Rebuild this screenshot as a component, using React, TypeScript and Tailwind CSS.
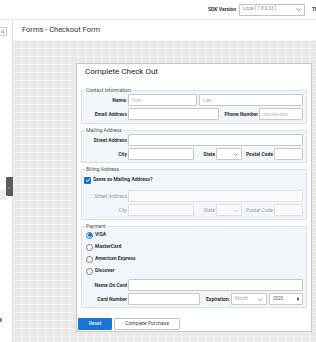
import React from 'react';
import clsx from 'clsx';

const Chevron = ({ className = '' }: { className?: string }) => (
  <svg viewBox="0 0 10 6" className={className} fill="none" stroke="currentColor" strokeWidth="1.3">
    <path d="M1 1l4 4 4-4" />
  </svg>
);

const Label = ({ children, w, muted }: { children: React.ReactNode; w: string; muted?: boolean }) => (
  <span
    className={clsx(
      'shrink-0 text-right pr-[1px] text-[5px] leading-none whitespace-nowrap',
      muted ? 'text-[#a0a0a0] font-normal' : 'font-bold text-[#333]',
      w
    )}
  >
    {children}
  </span>
);

const Field = ({ placeholder, className = '', muted }: { placeholder?: string; className?: string; muted?: boolean }) => (
  <input
    readOnly
    placeholder={placeholder}
    className={clsx(
      'h-[12px] w-0 min-w-0 rounded-[1px] border px-[3px] text-[4.5px] outline-none placeholder:text-[#b0b0b0]',
      muted ? 'border-[#dde2e8] bg-[#f8fafc]' : 'border-[#c8c8c8] bg-white',
      className
    )}
  />
);

const SelectBox = ({ text, className = '', muted }: { text?: string; className?: string; muted?: boolean }) => (
  <div
    className={clsx(
      'flex h-[12px] items-center justify-between rounded-[1px] border px-[3px] text-[4.5px]',
      muted ? 'border-[#dde2e8] bg-[#f8fafc] text-[#bbb]' : 'border-[#c8c8c8] bg-white text-[#666]',
      className
    )}
  >
    <span className="text-[#aaa]">{text}</span>
    <Chevron className="h-[3px] w-[5px]" />
  </div>
);

const Section = ({ legend, children, className = '' }: { legend: string; children: React.ReactNode; className?: string }) => (
  <fieldset className={clsx('mx-[4px] min-w-0 rounded-[1px] border border-[#d3e0ee] bg-[#f1f6fb] px-[3px]', className)}>
    <legend className="px-[1px] text-[5px] leading-[6px] text-[#555]">{legend}</legend>
    {children}
  </fieldset>
);

const Radio = ({ label, checked }: { label: string; checked?: boolean }) => (
  <div className="ml-[1px] flex h-[12px] items-center gap-[2px]">
    <span
      className={clsx(
        'flex h-[7px] w-[7px] items-center justify-center rounded-full border bg-white',
        checked ? 'border-[#1976d2]' : 'border-[#777]'
      )}
    >
      {checked && <span className="h-[4px] w-[4px] rounded-full bg-[#1976d2]" />}
    </span>
    <span className="text-[5px] font-bold text-[#333]">{label}</span>
  </div>
);

export default function App() {
  return (
    <div className="relative h-[342px] w-[316px] overflow-hidden bg-white font-[family-name:Roboto,sans-serif]">
      {/* top bar */}
      <div className="flex h-[20px] items-center justify-end border-b border-[#e6e6e6]">
        <span className="mr-[3px] text-[5px] font-bold text-[#333]">SDK Version</span>
        <div className="flex h-[12px] w-[66px] items-center justify-between border border-[#c4c4c4] px-[3px] text-[4.5px] text-[#888]">
          <span>Local [ 7.8.0.33 ]</span>
          <Chevron className="h-[3px] w-[5px] text-[#555]" />
        </div>
        <span className="ml-[7px] w-[4px] overflow-hidden text-[5px] font-bold text-[#333]">Th</span>
      </div>

      <div className="flex h-[322px]">
        {/* sidebar */}
        <div className="w-[13px] shrink-0 border-r border-[#e2e2e2] bg-white">
          <div className="mt-[7px] flex h-[9px] w-[7px] items-center justify-end border-y border-r border-[#cfcfcf] pr-[1px]">
            <svg viewBox="0 0 10 10" className="h-[4px] w-[4px] text-[#666]" fill="none" stroke="currentColor" strokeWidth="1.4">
              <circle cx="4" cy="4" r="3" />
              <path d="M6.3 6.3L9 9" />
            </svg>
          </div>
        </div>

        {/* main */}
        <div className="flex min-w-0 flex-1 flex-col">
          <div className="flex h-[20px] shrink-0 items-center bg-white pl-[9px] text-[7.5px] text-[#333]">
            Forms - Checkout Form
          </div>
          <div className="flex-1 bg-[#e9e9e9] bg-[linear-gradient(to_right,#f1f1f1_1px,transparent_1px),linear-gradient(to_bottom,#f1f1f1_1px,transparent_1px)] bg-[size:8px_8px] pl-[63px] pt-[23px]">
            <div className="w-[236px] border border-[#c9c9c9] bg-white pb-[1px]">
              <div className="flex h-[16px] items-center pl-[8px] text-[8px] text-[#222]">Complete Check Out</div>

              <Section legend="Contact Information" className="mt-[7px] pb-[3px]">
                <div className="mt-[1px] flex items-center">
                  <Label w="w-[43px]">Name:</Label>
                  <Field placeholder="First" className="w-[69px] shrink-0" />
                  <Field placeholder="Last" className="ml-[2px] flex-1" />
                </div>
                <div className="mt-[2px] flex items-center">
                  <Label w="w-[43px]">Email Address</Label>
                  <Field className="w-[91px] shrink-0" />
                  <Label w="w-[40px]">Phone Number</Label>
                  <Field placeholder="xxx-xxx-xxxx" className="flex-1" />
                </div>
              </Section>

              <Section legend="Mailing Address" className="mt-[3px] pb-[2px]">
                <div className="mt-[1px] flex items-center">
                  <Label w="w-[43px]">Street Address</Label>
                  <Field className="flex-1" />
                </div>
                <div className="mt-[2px] flex items-center">
                  <Label w="w-[43px]">City</Label>
                  <Field className="w-[66px] shrink-0" />
                  <Label w="w-[22px]">State</Label>
                  <SelectBox className="w-[26px] shrink-0" />
                  <Label w="w-[32px]">Postal Code</Label>
                  <Field className="flex-1" />
                </div>
              </Section>

              <Section legend="Billing Address" className="mt-[3px] pb-[3px]">
                <div className="-ml-[1px] mt-[3px] flex h-[10px] items-center gap-[2px]">
                  <span className="flex h-[7px] w-[7px] items-center justify-center rounded-[1px] bg-[#1976d2]">
                    <svg viewBox="0 0 8 8" className="h-[6px] w-[6px]" fill="none" stroke="white" strokeWidth="1.2">
                      <path d="M1.5 4.2l1.8 1.8 3.3-4" />
                    </svg>
                  </span>
                  <span className="text-[5px] font-bold text-[#333]">Same as Mailing Address?</span>
                </div>
                <div className="mt-[5px] flex items-center">
                  <Label w="w-[43px]" muted>Street Address</Label>
                  <Field className="flex-1" muted />
                </div>
                <div className="mt-[2px] flex items-center">
                  <Label w="w-[43px]" muted>City</Label>
                  <Field className="w-[66px] shrink-0" muted />
                  <Label w="w-[22px]" muted>State</Label>
                  <SelectBox className="w-[26px] shrink-0" muted />
                  <Label w="w-[32px]" muted>Postal Code</Label>
                  <Field className="flex-1" muted />
                </div>
              </Section>

              <Section legend="Payment" className="mt-[3px] pb-[2px]">
                <Radio label="VISA" checked />
                <Radio label="MasterCard" />
                <Radio label="American Express" />
                <Radio label="Discover" />
                <div className="mt-[2px] flex items-center">
                  <Label w="w-[43px]">Name On Card</Label>
                  <Field className="flex-1" />
                </div>
                <div className="mt-[2px] flex items-center">
                  <Label w="w-[43px]">Card Number</Label>
                  <Field className="w-[72px] shrink-0" />
                  <Label w="w-[31px]">Expiration:</Label>
                  <SelectBox text="Month" className="w-[36px] shrink-0" />
                  <div className="ml-[2px] flex h-[12px] flex-1 items-center justify-between rounded-[1px] border border-[#c8c8c8] bg-white px-[3px] text-[4.5px] text-[#555]">
                    <span>2025</span>
                    <span className="flex flex-col items-center gap-[0.5px]">
                      <span className="h-0 w-0 border-x-[1.5px] border-b-[2px] border-x-transparent border-b-[#333]" />
                      <span className="h-0 w-0 border-x-[1.5px] border-t-[2px] border-x-transparent border-t-[#333]" />
                    </span>
                  </div>
                </div>
              </Section>

              <div className="ml-[1px] mt-[10px] flex gap-[2px]">
                <button className="h-[12px] w-[34px] rounded-[1px] bg-[#1976d2] text-[5px] text-white">Reset</button>
                <button className="h-[12px] w-[66px] rounded-[1px] border border-[#c4c4c4] bg-white text-[5px] text-[#444]">
                  Complete Purchase
                </button>
              </div>
            </div>
          </div>
        </div>
      </div>

      {/* sidebar collapse tab */}
      <div className="absolute left-0 top-[190px] h-[10px] w-[6px] bg-[#ececec]" />
      <div className="absolute left-[6px] top-[177px] flex h-[19px] w-[7px] items-center justify-center rounded-l-[1px] bg-[#5b5b5b] text-[6px] leading-none text-[#cfcfcf]">
        ‹
      </div>
      <div className="absolute left-0 top-[318px] h-[4px] w-[2px] bg-[#888]" />
    </div>
  );
}
